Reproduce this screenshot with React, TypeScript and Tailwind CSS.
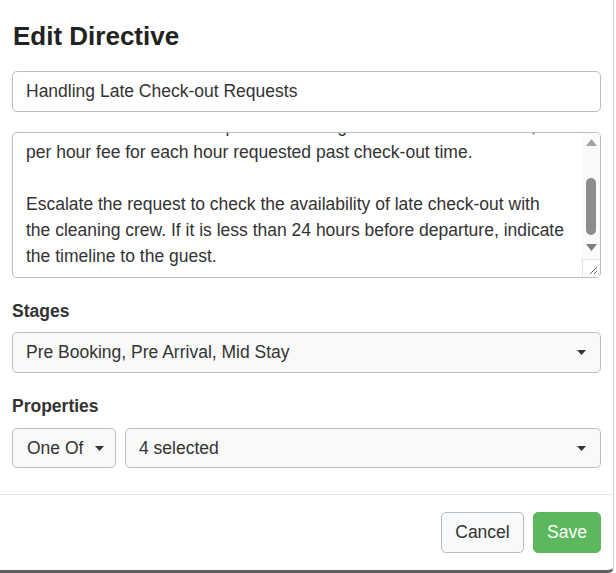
import React from 'react';

const FONT = { fontFamily: '"Liberation Sans", Arial, sans-serif' };

// linhas do textarea (já rolado: a primeira fica quase toda escondida)
const LINHAS = [
  'Inform them that a late departure is charged as an additional cost, at a flat',
  'per hour fee for each hour requested past check-out time.',
  '',
  'Escalate the request to check the availability of late check-out with',
  'the cleaning crew. If it is less than 24 hours before departure, indicate',
  'the timeline to the guest.',
  '',
];

function Caret() {
  return (
    <svg width="9" height="5" viewBox="0 0 9 5" className="shrink-0">
      <path d="M0 0h9L4.5 5z" fill="#333" />
    </svg>
  );
}

function Scrollbar() {
  return (
    <div className="flex w-[18px] shrink-0 flex-col bg-[#fafafa]">
      <div className="flex h-[17px] items-center justify-center pt-[2px]">
        <svg width="11" height="7" viewBox="0 0 11 7">
          <path d="M5.5 0L11 7H0z" fill="#a3a3a3" />
        </svg>
      </div>
      <div className="h-[89px] pt-[28px]">
        <div className="mx-auto h-[57px] w-[10px] rounded-full bg-[#8c8c8c]" />
      </div>
      <div className="flex h-[17px] items-center justify-center">
        <svg width="11" height="7" viewBox="0 0 11 7">
          <path d="M0 0h11L5.5 7z" fill="#7d7d7d" />
        </svg>
      </div>
      <div className="h-[3px]" />
      <div className="flex h-[18px] items-end justify-end border-t border-l border-[#e3e3e3] bg-white pr-[2px] pb-[2px]">
        <svg width="9" height="9" viewBox="0 0 9 9">
          <path d="M1 8L8 1M5 8L8 5" stroke="#666" strokeWidth="1" />
        </svg>
      </div>
    </div>
  );
}

export default function App() {
  return (
    <div className="h-[573px] w-[616px] overflow-hidden bg-white text-[#333]" style={FONT}>
      <div className="flex h-[573px] w-[614px] flex-col rounded-br-[6px] border-r border-b-[3px] border-r-[#d2d2d2] border-b-[#5e5e5e] bg-white">
        <h4 className="pt-[21px] pl-[13px] text-[26px] leading-[30px] font-bold text-[#222]">Edit Directive</h4>

        <div className="mx-[12px] mt-[20px] flex h-[41px] items-center rounded-[5px] border border-[#b8bfc6] bg-white px-[13px] text-[17.5px]">
          Handling Late Check-out Requests
        </div>

        <div className="mx-[12px] mt-[20px] flex h-[146px] overflow-hidden rounded-[5px] border border-[#b8bfc6] bg-white">
          <div className="min-w-0 flex-1 overflow-hidden pl-[13px] text-[17.5px] leading-[26px]">
            <div className="-mt-[20px]">
              {LINHAS.map((l, i) => (
                <div key={i} className="h-[26px] whitespace-nowrap">
                  {l || '\u00a0'}
                </div>
              ))}
            </div>
          </div>
          <Scrollbar />
        </div>

        <label className="mx-[12px] mt-[21px] text-[17.5px] leading-[25px] font-bold">Stages</label>
        <div className="mx-[12px] mt-[8px] flex h-[41px] items-center justify-between rounded-[5px] border border-[#b8bfc6] bg-[#f9f9f9] pr-[14px] pl-[13px] text-[17.5px]">
          <span>Pre Booking, Pre Arrival, Mid Stay</span>
          <Caret />
        </div>

        <label className="mx-[12px] mt-[21px] text-[17.5px] leading-[25px] font-bold">Properties</label>
        <div className="mx-[12px] mt-[9px] flex gap-[9px]">
          <div className="flex h-[40px] w-[104px] items-center justify-between rounded-[5px] border border-[#b8bfc6] bg-[#f9f9f9] pr-[11px] pl-[14px] text-[17.5px]">
            <span>One Of</span>
            <Caret />
          </div>
          <div className="flex h-[40px] flex-1 items-center justify-between rounded-[5px] border border-[#b8bfc6] bg-[#f9f9f9] pr-[14px] pl-[13px] text-[17.5px]">
            <span>4 selected</span>
            <Caret />
          </div>
        </div>

        <div className="mt-[26px] border-t border-[#e5e5e5]" />

        <div className="flex justify-end gap-[9px] pt-[17px] pr-[12px]">
          <button
            type="button"
            className="flex h-[41px] w-[83px] items-center justify-center rounded-[5px] border border-[#b5bcc3] bg-[#f8f9fa] text-[17.5px] text-[#333]"
          >
            Cancel
          </button>
          <button
            type="button"
            className="flex h-[41px] w-[68px] items-center justify-center rounded-[5px] border border-[#5cb85c] bg-[#5cb85c] text-[17.5px] text-white"
          >
            Save
          </button>
        </div>
      </div>
    </div>
  );
}
